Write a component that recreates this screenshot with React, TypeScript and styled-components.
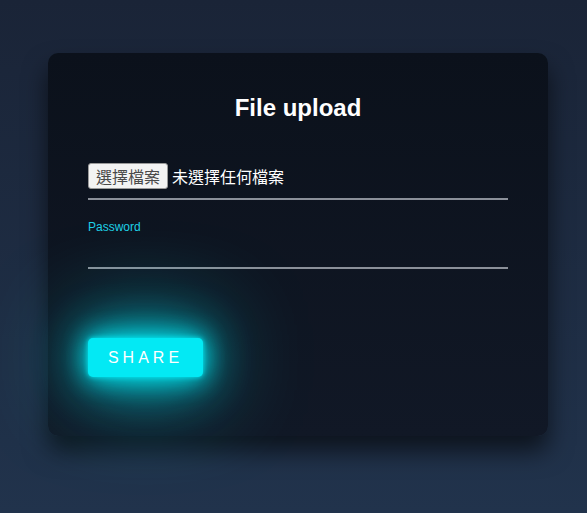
import React from "react";
import styled, { createGlobalStyle } from "styled-components";

const Global = createGlobalStyle`
  html, body { margin: 0; padding: 0; }
  body {
    min-height: 513px;
    background: linear-gradient(180deg, #1a2437 0%, #21334c 100%);
    font-family: "Liberation Sans", Arial, "Noto Sans CJK TC", sans-serif;
    overflow: hidden;
  }
`;

const Page = styled.div`
  display: flex;
  padding: 53px 0 0 48px;
`;

const Card = styled.form`
  box-sizing: border-box;
  width: 500px;
  height: 383px;
  padding: 41px 40px 40px;
  border-radius: 10px;
  background: linear-gradient(180deg, #0b111b 0%, #111826 100%);
  box-shadow: 0 15px 25px rgba(0, 0, 0, 0.6);
  display: flex;
  flex-direction: column;
  overflow: visible;
`;

const Title = styled.h2`
  margin: 0 0 41px;
  text-align: center;
  color: #fff;
  font-size: 24px;
  font-weight: 700;
  line-height: 28px;
`;

const Field = styled.div<{ $gap: number }>`
  display: flex;
  flex-direction: column;
  border-bottom: 2px solid #8b9099;
  margin-bottom: ${(p) => p.$gap}px;
`;

const FileRow = styled.div`
  display: flex;
  align-items: center;
  gap: 4px;
  padding: 0 0 9px;
  font-size: 16px;
  color: #fff;
`;

const FileButton = styled.button`
  box-sizing: border-box;
  width: 80px;
  height: 26px;
  padding: 0;
  font-family: "Noto Sans CJK TC", sans-serif;
  font-size: 16px;
  line-height: 24px;
  color: #4a4a4a;
  background: #f3f3f3;
  border: 1px solid #9a9a9a;
  border-radius: 3px;
`;

const FileText = styled.span`
  font-family: "Noto Sans CJK TC", sans-serif;
  font-size: 16px;
  line-height: 24px;
  color: #fff;
`;

const Label = styled.label`
  font-size: 12px;
  line-height: 14px;
  color: #1fd0e6;
`;

const Input = styled.input`
  height: 33px;
  background: transparent;
  border: none;
  outline: none;
  padding: 0;
  color: #fff;
  font-size: 16px;
`;

const ShareButton = styled.button`
  align-self: flex-start;
  box-sizing: border-box;
  width: 115px;
  height: 39px;
  padding: 0;
  border: none;
  border-radius: 5px;
  background: #03e9f4;
  color: #fff;
  font-family: "Liberation Sans", Arial, sans-serif;
  font-size: 16px;
  letter-spacing: 4px;
  text-transform: uppercase;
  box-shadow: 0 0 5px #03e9f4, 0 0 25px #03e9f4, 0 0 50px #03e9f4,
    0 0 100px #03e9f4;
`;

export default function App() {
  return (
    <>
      <Global />
      <Page>
        <Card onSubmit={(e) => e.preventDefault()}>
          <Title>File upload</Title>
          <Field $gap={20}>
            <FileRow>
              <FileButton type="button">選擇檔案</FileButton>
              <FileText>未選擇任何檔案</FileText>
            </FileRow>
          </Field>
          <Field $gap={69}>
            <Label>Password</Label>
            <Input type="password" />
          </Field>
          <ShareButton type="submit">Share</ShareButton>
        </Card>
      </Page>
    </>
  );
}
